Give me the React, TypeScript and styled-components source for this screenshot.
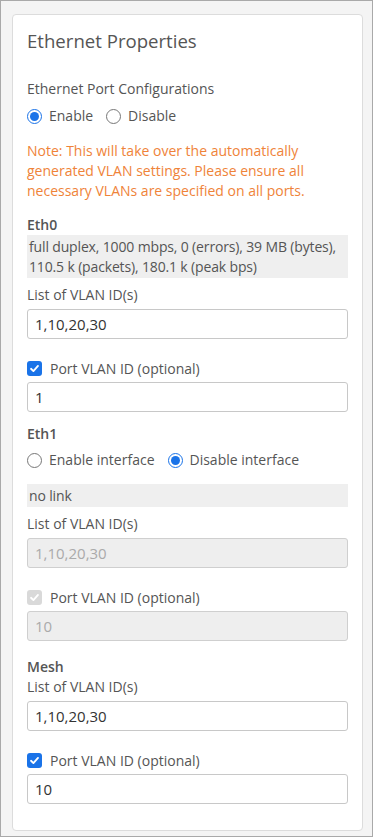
import { FC } from "react";
import styled, { createGlobalStyle } from "styled-components";

const GlobalStyle = createGlobalStyle`
  html, body {
    margin: 0;
    padding: 0;
    background: #f4f4f4;
  }
  body {
    font-family: "Open Sans", "Liberation Sans", sans-serif;
    font-size: 14px;
    color: #555;
  }
  * {
    box-sizing: border-box;
  }
`;

const SFrame = styled.div`
  width: 373px;
  height: 837px;
  border: 1px solid #a9a9a9;
  background: #f4f4f4;
  padding: 13px 9px 0 11px;
`;

const SCard = styled.section`
  background: #fff;
  border: 1px solid #dcdcdc;
  border-radius: 4px;
  padding: 12px 14px 26px 14px;
`;

const STitle = styled.h2`
  margin: 0 0 24px;
  font-size: 18.6px;
  font-weight: 400;
  color: #555;
  line-height: 28px;
`;

const SLabel = styled.div`
  line-height: 20px;
  color: #555;
`;

const SHeading = styled.div`
  font-weight: 600;
  line-height: 20px;
  color: #555;
`;

const SRadioRow = styled.div<{ $gap: number; $top: number }>`
  display: flex;
  align-items: center;
  gap: ${(p) => p.$gap}px;
  height: 24px;
  margin-top: ${(p) => p.$top}px;
`;

const SOption = styled.label`
  display: flex;
  align-items: center;
  gap: 7px;
  color: #555;
  line-height: 20px;
`;

const SRadio = styled.span<{ $on: boolean }>`
  width: 15px;
  height: 15px;
  border-radius: 50%;
  border: ${(p) => (p.$on ? "1px solid #1a73e8" : "1px solid #777")};
  background: #fff;
  display: flex;
  align-items: center;
  justify-content: center;

  &::after {
    content: "";
    display: ${(p) => (p.$on ? "block" : "none")};
    width: 9px;
    height: 9px;
    border-radius: 50%;
    background: #1a73e8;
  }
`;

const SNote = styled.p`
  margin: 13px 0 14px;
  color: #ef8339;
  line-height: 20px;
`;

const SStatus = styled.div`
  background: #efefef;
  color: #555;
  line-height: 20px;
  padding: 2px 2px 1px;
  letter-spacing: -0.15px;
`;

const SField = styled.div<{ $top: number }>`
  margin-top: ${(p) => p.$top}px;
`;

const SInput = styled.input`
  display: block;
  width: 100%;
  height: 30px;
  margin-top: 4px;
  padding: 0 7px;
  border: 1px solid #c8c8c8;
  border-radius: 3px;
  font-family: inherit;
  font-size: 15px;
  color: #333;
  background: #fff;

  &:disabled {
    background: #eeeeee;
    color: #aaa;
    border-color: #cfcfcf;
  }
`;

const SCheckRow = styled.label`
  display: flex;
  align-items: center;
  gap: 8px;
  margin-top: 19px;
  height: 20px;
  color: #555;
`;

const SCheck = styled.span<{ $disabled?: boolean }>`
  width: 15px;
  height: 15px;
  border-radius: 3px;
  background: ${(p) => (p.$disabled ? "#d9d9d9" : "#1a73e8")};
  display: flex;
  align-items: center;
  justify-content: center;

  svg {
    width: 11px;
    height: 11px;
  }
`;

const SSection = styled.div<{ $top: number }>`
  margin-top: ${(p) => p.$top}px;
`;

const Check: FC<{ disabled?: boolean }> = ({ disabled }) => (
  <SCheck $disabled={disabled}>
    <svg viewBox="0 0 12 12">
      <path
        d="M2.2 6.3 L4.8 8.8 L9.8 3.2"
        fill="none"
        stroke="#fff"
        strokeWidth="2"
        strokeLinecap="round"
        strokeLinejoin="round"
      />
    </svg>
  </SCheck>
);

const Vlan: FC<{ list: string; pvid: string; disabled?: boolean; top: number }> = ({
  list,
  pvid,
  disabled,
  top,
}) => (
  <>
    <SField $top={top}>
      <SLabel>List of VLAN ID(s)</SLabel>
      <SInput defaultValue={list} disabled={disabled} />
    </SField>
    <SCheckRow>
      <Check disabled={disabled} />
      Port VLAN ID (optional)
    </SCheckRow>
    <SInput defaultValue={pvid} disabled={disabled} />
  </>
);

const App: FC = () => {
  return (
    <SFrame>
      <GlobalStyle />
      <SCard>
        <STitle>Ethernet Properties</STitle>
        <SLabel>Ethernet Port Configurations</SLabel>
        <SRadioRow $gap={13} $top={5}>
          <SOption>
            <SRadio $on />
            Enable
          </SOption>
          <SOption>
            <SRadio $on={false} />
            Disable
          </SOption>
        </SRadioRow>
        <SNote>
          Note: This will take over the automatically generated VLAN settings.
          Please ensure all necessary VLANs are specified on all ports.
        </SNote>

        <SHeading>Eth0</SHeading>
        <SStatus>
          full duplex, 1000 mbps, 0 (errors), 39 MB (bytes), 110.5 k (packets),
          180.1 k (peak bps)
        </SStatus>
        <Vlan list="1,10,20,30" pvid="1" top={7} />

        <SSection $top={12}>
          <SHeading>Eth1</SHeading>
          <SRadioRow $gap={13} $top={4}>
            <SOption>
              <SRadio $on={false} />
              Enable interface
            </SOption>
            <SOption>
              <SRadio $on />
              Disable interface
            </SOption>
          </SRadioRow>
        </SSection>
        <SField $top={12}>
          <SStatus>no link</SStatus>
        </SField>
        <Vlan list="1,10,20,30" pvid="10" disabled top={7} />

        <SSection $top={16}>
          <SHeading>Mesh</SHeading>
        </SSection>
        <Vlan list="1,10,20,30" pvid="10" top={0} />
      </SCard>
    </SFrame>
  );
};

export default App;
